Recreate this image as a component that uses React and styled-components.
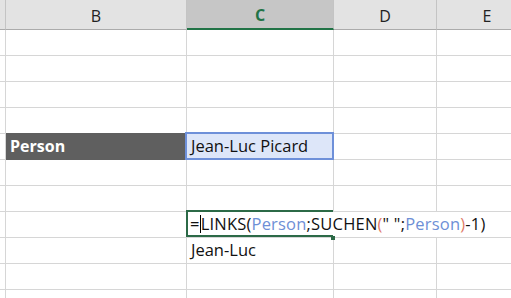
import React from 'react'
import styled, { createGlobalStyle, css } from 'styled-components'

const GlobalStyle = createGlobalStyle`
  html, body {
    margin: 0;
    padding: 0;
    background: #ffffff;
    overflow: hidden;
  }
  body {
    font-family: "Open Sans", Lato, "Liberation Sans", sans-serif;
  }
`

const columns = ['', 'B', 'C', 'D', 'E']
const rowCount = 11

const Viewport = styled.div`
  width: 511px;
  height: 298px;
  overflow: hidden;
`

const Sheet = styled.div`
  display: grid;
  grid-template-columns: 6px 181px 147px 103px 101px;
  grid-template-rows: 30px repeat(${rowCount}, 26px);
  width: 538px;
  font-size: 16.5px;
  color: #111;
`

const HeadCell = styled.div`
  box-sizing: border-box;
  background: ${(p) => (p.$active ? '#c6c6c6' : '#e3e3e3')};
  border-right: 1px solid #c4c4c4;
  border-bottom: ${(p) => (p.$active ? '2px solid #217346' : '1px solid #ababab')};
  display: flex;
  align-items: center;
  justify-content: center;
  padding-top: 2px;
  font-family: "Open Sans", Lato, sans-serif;
  font-size: 16px;
  font-weight: ${(p) => (p.$active ? 700 : 400)};
  color: ${(p) => (p.$active ? '#217346' : '#222')};
`

const Cell = styled.div`
  box-sizing: border-box;
  position: relative;
  border-right: 1px solid #d6d6d6;
  border-bottom: 1px solid #d6d6d6;
  display: flex;
  align-items: flex-end;
  padding: 0 0 2px 4px;
  white-space: nowrap;
  ${(p) =>
    p.$label &&
    css`
      background: #5f5f5f;
      color: #ffffff;
      font-weight: 700;
      font-size: 16px;
      border-color: #5f5f5f;
      margin-top: -1px;
      padding-left: 4px;
    `}
  ${(p) =>
    p.$picked &&
    css`
      background: #dde6f9;
      &::after {
        content: '';
        position: absolute;
        left: -2px;
        top: -2px;
        right: -1px;
        bottom: -1px;
        border: 2px solid #6e90d9;
      }
    `}
  ${(p) =>
    p.$span &&
    css`
      grid-column: span ${p.$span};
      border-right: none;
      z-index: 2;
    `}
`

const EditFrame = styled.div`
  position: absolute;
  left: -1px;
  top: -2px;
  width: 147px;
  height: 27px;
  border: 2px solid #2c6a47;
  border-right: none;
  box-sizing: border-box;
  pointer-events: none;
`

const FillHandle = styled.div`
  position: absolute;
  left: 144px;
  top: 24px;
  width: 4px;
  height: 4px;
  background: #2c6a47;
`

const Caret = styled.span`
  display: inline-block;
  width: 1px;
  height: 18px;
  background: #000;
  margin: 0 0 -3px 0;
  vertical-align: baseline;
`

const FormulaText = styled.span`
  letter-spacing: 0.2px;
`

const Tok = styled.span`
  color: ${(p) => (p.$kind === 'ref' ? '#6e8fd6' : p.$kind === 'paren' ? '#e07a68' : '#111')};
`

const Formula = () => (
  <FormulaText>
    =<Caret />LINKS(<Tok $kind="ref">Person</Tok>;SUCHEN<Tok $kind="paren">(</Tok>" ";
    <Tok $kind="ref">Person</Tok>
    <Tok $kind="paren">)</Tok>-1)
  </FormulaText>
)

export default function App() {
  const rows = []
  for (let r = 0; r < rowCount; r++) {
    rows.push(<Cell key={`a${r}`} />)
    if (r === 4) {
      rows.push(<Cell key={`b${r}`} $label>Person</Cell>)
      rows.push(<Cell key={`c${r}`} $picked>Jean-Luc Picard</Cell>)
      rows.push(<Cell key={`d${r}`} />)
      rows.push(<Cell key={`e${r}`} />)
    } else if (r === 7) {
      rows.push(<Cell key={`b${r}`} />)
      rows.push(
        <Cell key={`c${r}`} $span={3} style={{ paddingLeft: 3 }}>
          <EditFrame />
          <FillHandle />
          <Formula />
        </Cell>
      )
    } else if (r === 8) {
      rows.push(<Cell key={`b${r}`} />)
      rows.push(<Cell key={`c${r}`}>Jean-Luc</Cell>)
      rows.push(<Cell key={`d${r}`} />)
      rows.push(<Cell key={`e${r}`} />)
    } else {
      for (let c = 1; c < 5; c++) rows.push(<Cell key={`${c}-${r}`} />)
    }
  }

  return (
    <>
      <GlobalStyle />
      <Viewport>
        <Sheet>
          {columns.map((c) => (
            <HeadCell key={c || 'corner'} $active={c === 'C'}>
              {c}
            </HeadCell>
          ))}
          {rows}
        </Sheet>
      </Viewport>
    </>
  )
}
